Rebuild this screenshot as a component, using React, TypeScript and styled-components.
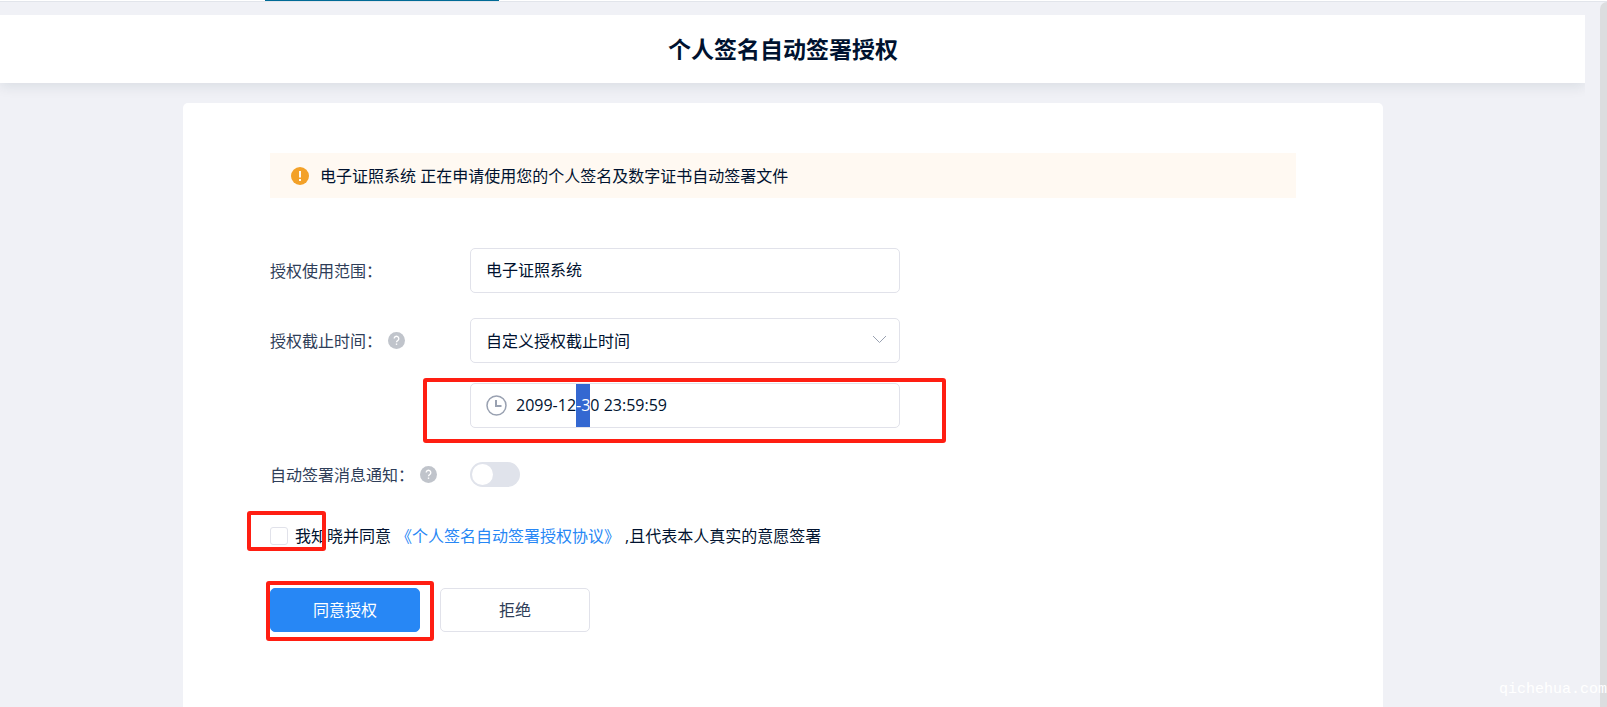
import { useEffect, useRef, useState } from 'react';
import styled, { createGlobalStyle } from 'styled-components';

const GlobalStyle = createGlobalStyle`
  *, *::before, *::after { box-sizing: border-box; }
  body {
    margin: 0;
    background: #f0f1f6;
    color: #00122f;
    font-family: "Open Sans", "Noto Sans CJK SC", sans-serif;
    font-size: 16px;
    line-height: 24px;
  }
  button, input, select { font: inherit; color: inherit; }
`;

const Page = styled.div`
  position: relative;
  display: flex;
  flex-direction: column;
  min-height: 100vh;
  overflow: hidden;
`;

const TabStrip = styled.div`
  flex: none;
  height: 2px;
  padding-left: 265px;
  background: #fff;
  border-bottom: 1px solid #e2e5eb;
`;

const ActiveTab = styled.div`
  width: 234px;
  height: 1px;
  background: #006a96;
`;

const Viewport = styled.div`
  flex: 1;
  display: flex;
`;

const Content = styled.div`
  flex: 1;
  display: flex;
  flex-direction: column;
  padding: 13px 15px 0 0;
`;

const ScrollThumb = styled.div`
  width: 7px;
  background: #dcdddf;
  border-top-left-radius: 7px;
`;

const Header = styled.header`
  display: flex;
  align-items: center;
  justify-content: center;
  height: 68px;
  padding: 0 19px 2px 0;
  background: #fff;
  box-shadow: 0 4px 12px rgba(0, 40, 50, 0.09);
  clip-path: inset(0 0 -20px 0);
`;

const Title = styled.h1`
  margin: 0;
  font-family: "Noto Sans CJK SC", sans-serif;
  font-size: 23px;
  line-height: 32px;
  font-weight: 700;
`;

const Main = styled.main`
  flex: 1;
  display: flex;
  justify-content: center;
  padding: 20px 19px 0 0;
`;

const Card = styled.form`
  width: 100%;
  max-width: 1200px;
  padding: 50px 87px 66px;
  background: #fff;
  border-radius: 5px 5px 0 0;
`;

const Notice = styled.div`
  display: flex;
  align-items: center;
  gap: 11px;
  min-height: 45px;
  margin-bottom: 50px;
  padding: 0 21px;
  background: #fff9f2;
`;

const Row = styled.div<{ $gap: number }>`
  display: flex;
  align-items: center;
  min-height: 45px;
  margin-bottom: ${(p) => p.$gap}px;
`;

const LabelCell = styled.div`
  flex: none;
  display: flex;
  align-items: center;
  gap: 6px;
  width: 200px;
  color: #2f3e59;
`;

const FieldBox = styled.div`
  position: relative;
  width: 100%;
  max-width: 430px;
  height: 45px;
  display: flex;
  align-items: center;
  border: 1px solid #e1e2ea;
  border-radius: 5px;
  background: #fff;
`;

const TextInput = styled.input`
  flex: 1;
  min-width: 0;
  height: 43px;
  padding: 0 15px;
  border: 0;
  outline: 0;
  background: transparent;
  line-height: 43px;
`;

const DateInput = styled(TextInput)`
  padding-left: 9px;
  &::selection { background: rgba(51, 103, 209, 0.996); color: #fff; }
`;

const Select = styled.select`
  flex: 1;
  height: 43px;
  padding: 0 40px 0 15px;
  border: 0;
  outline: 0;
  appearance: none;
  background: transparent;
`;

const Chevron = styled.svg`
  position: absolute;
  right: 12px;
  top: 16px;
  pointer-events: none;
`;

const ClockIcon = styled.svg`
  flex: none;
  margin-left: 15px;
`;

const Switch = styled.input`
  position: relative;
  appearance: none;
  width: 50px;
  height: 25px;
  margin: 0;
  border-radius: 13px;
  background: #e0e3eb;
  cursor: pointer;
  &::before {
    content: "";
    display: block;
    width: 21px;
    height: 21px;
    margin: 2px;
    border-radius: 50%;
    background: #fff;
  }
  &:checked { background: #2787f5; }
  &:checked::before { margin-left: 27px; }
`;

const Agreement = styled.div`
  position: relative;
  display: flex;
  align-items: center;
  height: 24px;
  margin-bottom: 40px;
`;

const Checkbox = styled.input`
  appearance: none;
  width: 18px;
  height: 18px;
  margin: 0 7px 0 0;
  border: 1px solid #e1e2ea;
  border-radius: 3px;
  background: #fff;
  &:checked { background: #2787f5; border-color: #2787f5; }
`;

const AgreementLink = styled.a`
  margin: 0 5px;
  color: #2787f5;
  text-decoration: none;
`;

const Actions = styled.div`
  position: relative;
  display: flex;
  gap: 20px;
`;

const Button = styled.button<{ $primary?: boolean }>`
  width: 150px;
  height: 44px;
  padding: 0;
  border: 1px solid ${(p) => (p.$primary ? '#2787f5' : '#e1e2ea')};
  border-radius: 5px;
  background: ${(p) => (p.$primary ? '#2787f5' : '#fff')};
  color: ${(p) => (p.$primary ? '#fff' : '#2f3e59')};
  cursor: pointer;
`;

const Highlight = styled.span<{ $top: number; $left: number; $width: number; $height: number }>`
  position: absolute;
  top: ${(p) => p.$top}px;
  left: ${(p) => p.$left}px;
  width: ${(p) => p.$width}px;
  height: ${(p) => p.$height}px;
  border: 4px solid #ff1e12;
  border-radius: 3px;
  pointer-events: none;
`;

const Watermark = styled.span`
  position: absolute;
  right: 0;
  bottom: 8px;
  color: #fff;
  font-family: "Liberation Mono", monospace;
  font-size: 15px;
  line-height: 18px;
`;

const HelpIcon = ({ label }: { label: string }) => (
  <svg width="17" height="17" viewBox="0 0 17 17" role="img" aria-label={label}>
    <circle cx="8.5" cy="8.5" r="8.5" fill="#c0c4cb" />
    <path d="M6.2 6.6a2.3 2.3 0 1 1 3.6 1.9c-.9.6-1.3.9-1.3 1.7" fill="none" stroke="#fff" strokeWidth="1.3" />
    <rect x="7.8" y="11.5" width="1.4" height="1.4" fill="#fff" />
  </svg>
);

export default function App() {
  const dateRef = useRef<HTMLInputElement>(null);
  const [date, setDate] = useState('2099-12-30 23:59:59');

  useEffect(() => {
    dateRef.current?.focus();
    dateRef.current?.setSelectionRange(7, 9);
  }, []);

  return (
    <Page>
      <GlobalStyle />
      <TabStrip>
        <ActiveTab />
      </TabStrip>
      <Viewport>
        <Content>
          <Header>
            <Title>个人签名自动签署授权</Title>
          </Header>
          <Main>
            <Card onSubmit={(e) => e.preventDefault()}>
              <Notice>
                <svg width="18" height="18" viewBox="0 0 18 18" aria-hidden="true">
                  <circle cx="9" cy="9" r="9" fill="#f3a128" />
                  <path d="M8 4h2v6.5H8zM8 12h2v2H8z" fill="#fff9f2" />
                </svg>
                <span>电子证照系统 正在申请使用您的个人签名及数字证书自动签署文件</span>
              </Notice>

              <Row $gap={25}>
                <LabelCell>
                  <label htmlFor="scope">授权使用范围：</label>
                </LabelCell>
                <FieldBox>
                  <TextInput id="scope" defaultValue="电子证照系统" />
                </FieldBox>
              </Row>

              <Row $gap={20}>
                <LabelCell>
                  <label htmlFor="deadline">授权截止时间：</label>
                  <HelpIcon label="帮助" />
                </LabelCell>
                <FieldBox>
                  <Select id="deadline">
                    <option>自定义授权截止时间</option>
                  </Select>
                  <Chevron width="15" height="9" viewBox="0 0 15 9" aria-hidden="true">
                    <path d="M1 1l6.5 6.5L14 1" fill="none" stroke="#99a1b1" />
                  </Chevron>
                </FieldBox>
              </Row>

              <Row $gap={24}>
                <LabelCell />
                <FieldBox>
                  <ClockIcon width="21" height="21" viewBox="0 0 21 21" aria-hidden="true">
                    <circle cx="10.5" cy="10.5" r="9.5" fill="none" stroke="#99a1b1" strokeWidth="1.5" />
                    <path d="M10 5v6h5.5" fill="none" stroke="#99a1b1" strokeWidth="2" />
                  </ClockIcon>
                  <DateInput
                    ref={dateRef}
                    aria-label="授权截止时间"
                    value={date}
                    onChange={(e) => setDate(e.target.value)}
                  />
                  <Highlight $top={-6} $left={-48} $width={523} $height={65} />
                </FieldBox>
              </Row>

              <Row $gap={27}>
                <LabelCell>
                  <label htmlFor="notify">自动签署消息通知：</label>
                  <HelpIcon label="帮助" />
                </LabelCell>
                <Switch id="notify" type="checkbox" role="switch" />
              </Row>

              <Agreement>
                <Checkbox id="agree" type="checkbox" />
                <label htmlFor="agree">我知晓并同意</label>
                <AgreementLink href="#agreement">《个人签名自动签署授权协议》</AgreementLink>
                <span>,且代表本人真实的意愿签署</span>
                <Highlight $top={-13} $left={-23} $width={79} $height={40} />
              </Agreement>

              <Actions>
                <Button type="submit" $primary>
                  同意授权
                </Button>
                <Button type="button">拒绝</Button>
                <Highlight $top={-7} $left={-4} $width={168} $height={60} />
              </Actions>
            </Card>
          </Main>
        </Content>
        <ScrollThumb />
      </Viewport>
      <Watermark>qichehua.com</Watermark>
    </Page>
  );
}
